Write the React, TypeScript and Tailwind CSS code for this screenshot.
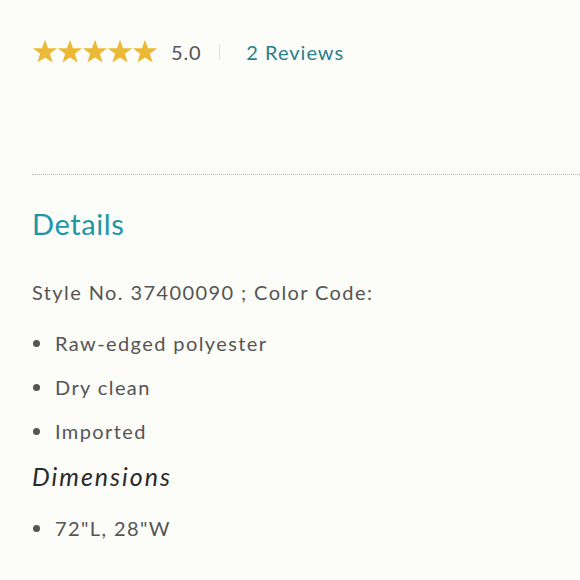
const features = ["Raw-edged polyester", "Dry clean", "Imported"];

function StarIcon() {
  return (
    <svg viewBox="0 0 24 24" className="w-[26px] h-[26px] -mr-[1px]">
      <polygon
        points="12,0.8 14.8,8.6 23.2,8.6 16.5,13.7 19,21.8 12,17 5,21.8 7.5,13.7 0.8,8.6 9.2,8.6"
        fill="#ebb935"
      />
    </svg>
  );
}

function Bullet({ text }: { text: string }) {
  return (
    <li className="flex items-center h-[44px]">
      <span className="w-[7px] h-[7px] rounded-full bg-[#555] ml-[1px] mr-[15px]" />
      <span>{text}</span>
    </li>
  );
}

export default function App() {
  return (
    <div
      className="w-[580px] h-[580px] bg-[#fcfcf8] pl-[32px] overflow-hidden"
      style={{ fontFamily: "Lato, 'Noto Sans', sans-serif" }}
    >
      {/* Rating */}
      <div className="flex items-center h-[40px] mt-[32px]">
        <div className="flex">
          {[0, 1, 2, 3, 4].map((i) => (
            <StarIcon key={i} />
          ))}
        </div>
        <span className="ml-[14px] text-[20px] tracking-[0.04em] text-[#555]">5.0</span>
        <span className="ml-[18px] w-px h-[16px] bg-[#e2e2dc]" />
        <span className="ml-[26px] text-[20px] tracking-[0.05em] text-[#2a7f8e]">2 Reviews</span>
      </div>

      <div className="mt-[102px] border-t border-dotted border-[#b8b8b0]" />

      {/* Details */}
      <h2 className="mt-[31px] text-[29px] leading-[36px] tracking-[0.02em] text-[#1b97a6]">Details</h2>

      <div className="text-[20px] tracking-[0.07em] text-[#555]">
        <p className="mt-[36px] leading-[28px]">Style No. 37400090 ; Color Code:</p>
        <ul className="mt-[15px]">
          {features.map((f) => (
            <Bullet key={f} text={f} />
          ))}
        </ul>
        <h3 className="mt-[8px] text-[25px] leading-[30px] italic tracking-[0.08em] text-[#2a2a2a]">
          Dimensions
        </h3>
        <ul className="mt-[15px]">
          <Bullet text={'72"L, 28"W'} />
        </ul>
      </div>
    </div>
  );
}
